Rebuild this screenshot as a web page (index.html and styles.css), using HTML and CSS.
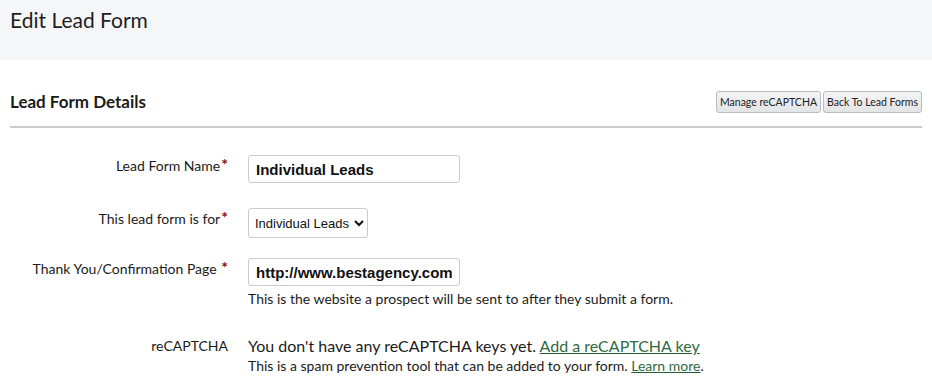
FILE: index.html
```html
<!DOCTYPE html>
<html lang="en">
  <head>
    <meta charset="UTF-8" />
    <meta name="viewport" content="width=device-width, initial-scale=1.0" />
    <title>Edit Lead Form</title>
    <link rel="stylesheet" href="styles.css">
  </head>
  <body>
    <div class="page-header">
      <h1>Edit Lead Form</h1>
    </div>

    <div class="content">
      <div class="section-head">
        <h2>Lead Form Details</h2>
        <div class="head-buttons">
          <button class="btn">Manage reCAPTCHA</button>
          <button class="btn">Back To Lead Forms</button>
        </div>
      </div>

      <form class="form">
        <div class="form-row row-name">
          <label class="form-label">Lead Form Name<span class="req">*</span></label>
          <div class="form-field">
            <input type="text" class="text-input" value="Individual Leads" />
          </div>
        </div>

        <div class="form-row row-for">
          <label class="form-label">This lead form is for<span class="req">*</span></label>
          <div class="form-field">
            <select class="select-input">
              <option>Individual Leads</option>
            </select>
          </div>
        </div>

        <div class="form-row row-thanks">
          <label class="form-label">Thank You/Confirmation Page <span class="req">*</span></label>
          <div class="form-field">
            <input type="text" class="text-input" value="http://www.bestagency.com" />
            <div class="help">This is the website a prospect will be sent to after they submit a form.</div>
          </div>
        </div>

        <div class="form-row row-captcha">
          <label class="form-label label-plain">reCAPTCHA</label>
          <div class="form-field">
            <div class="captcha-text">You don't have any reCAPTCHA keys yet. <a href="#">Add a reCAPTCHA key</a></div>
            <div class="help">This is a spam prevention tool that can be added to your form. <a href="#">Learn more</a>.</div>
          </div>
        </div>
      </form>
    </div>
  </body>
</html>
```

FILE: styles.css
```css
* {
  margin: 0;
  padding: 0;
  box-sizing: border-box;
}

body {
  font-family: "Lato", "Liberation Sans", sans-serif;
  color: #1b1b1b;
  background: #fff;
}

.page-header {
  background: #f5f6f8;
  height: 60px;
  padding: 6px 10px 0;
}

.page-header h1 {
  font-size: 21px;
  font-weight: normal;
  line-height: 28px;
  color: #1e1e1e;
}

.content {
  padding: 0 10px;
}

.section-head {
  display: flex;
  align-items: center;
  justify-content: space-between;
  margin-top: 31px;
  padding-bottom: 13px;
  border-bottom: 2px solid #c9cbce;
}

.section-head h2 {
  font-size: 17px;
  font-weight: bold;
  line-height: 22px;
}

.head-buttons {
  display: flex;
  gap: 2px;
}

.btn {
  font-family: "Lato", "Liberation Sans", sans-serif;
  font-size: 10.5px;
  color: #222;
  height: 22px;
  padding: 0 3px;
  background: linear-gradient(#f3f4f5, #e2e4e6);
  border: 1px solid #b9bcbf;
  border-radius: 3px;
}

.form {
  padding-top: 27px;
}

.form-row {
  display: grid;
  grid-template-columns: 218px 1fr;
  column-gap: 20px;
}

.form-label {
  text-align: right;
  font-size: 14px;
  line-height: 18px;
  padding-top: 2px;
  color: #1b1b1b;
}

.req {
  color: #7d1010;
  font-weight: bold;
  vertical-align: top;
  font-size: 16px;
  line-height: 14px;
  margin-left: 1px;
}

.text-input {
  width: 212px;
  height: 28px;
  padding: 0 7px;
  font-family: "Liberation Sans", Arial, sans-serif;
  font-size: 15px;
  font-weight: bold;
  color: #111;
  border: 1px solid #c9cbce;
  border-radius: 3px;
  background: #fff;
}

.select-input {
  height: 30px;
  padding: 0 2px;
  font-family: "Liberation Sans", Arial, sans-serif;
  font-size: 13px;
  color: #111;
  border: 1px solid #c9cbce;
  border-radius: 3px;
  background: #fff;
}

.row-name {
  margin-bottom: 25px;
}

.row-for {
  margin-bottom: 20px;
}

.row-thanks {
  margin-bottom: 27px;
}

.help {
  font-size: 14px;
  line-height: 18px;
  margin-top: 4px;
  color: #1b1b1b;
}

.label-plain {
  padding-top: 2px;
}

.captcha-text {
  font-size: 16px;
  line-height: 22px;
  color: #1b1b1b;
}

.row-captcha .help {
  margin-top: 0;
}

a {
  color: #2f6b3f;
  text-decoration: underline;
  text-decoration-color: #1f5e2e;
}
```
